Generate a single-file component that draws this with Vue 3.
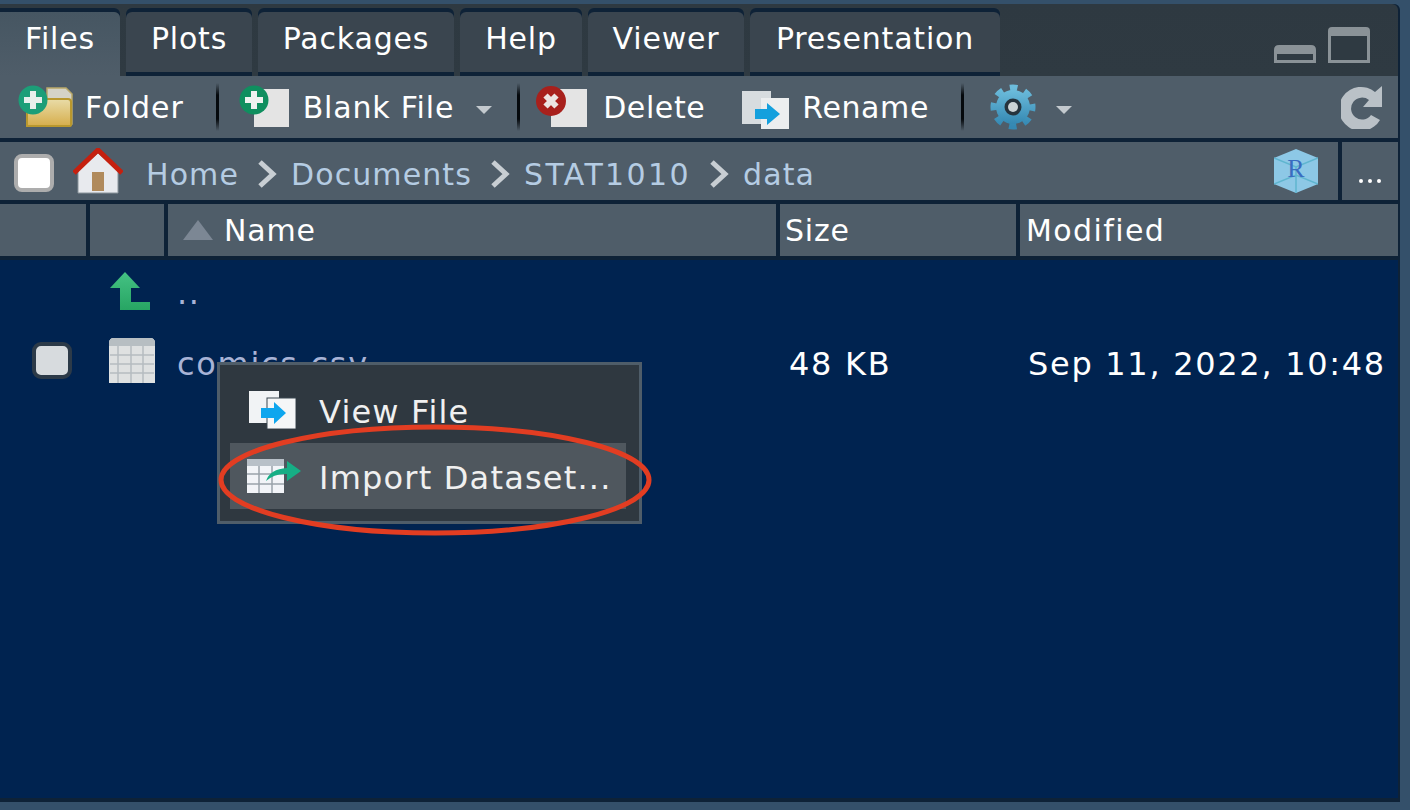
<script setup>
const tabs = [
  { label: "Files", width: 120, active: true },
  { label: "Plots", width: 126 },
  { label: "Packages", width: 196 },
  { label: "Help", width: 122 },
  { label: "Viewer", width: 156 },
  { label: "Presentation", width: 250 },
];

const crumbs = ["Home", "Documents", "STAT1010", "data"];
</script>

<template>
  <div class="page">
    <div class="pane">
      <!-- tabs -->
      <div class="tabs">
        <div
          v-for="tab in tabs"
          :key="tab.label"
          class="tab"
          :class="{ active: tab.active }"
          :style="{ width: `${tab.width}px` }"
        >
          {{ tab.label }}
        </div>
        <div class="win-btns">
          <svg width="42" height="18" viewBox="0 0 42 18">
            <path d="M0 18V5q0-5 5-5h32q5 0 5 5v13z" fill="#8a9297" />
            <rect x="3" y="9" width="36" height="6" fill="#2f3a42" />
          </svg>
          <svg width="42" height="36" viewBox="0 0 42 36">
            <path d="M0 36V4q0-4 4-4h34q4 0 4 4v32z" fill="#8a9297" />
            <rect x="3" y="9" width="36" height="24" fill="#2f3a42" />
          </svg>
        </div>
      </div>

      <!-- toolbar -->
      <div class="toolbar">
        <div class="tool tool-folder">
          <svg class="ico" width="56" height="44" viewBox="0 0 56 44">
            <defs>
              <linearGradient id="folderFill" x1="0" y1="0" x2="0" y2="1">
                <stop offset="0" stop-color="#e9dca8" />
                <stop offset="1" stop-color="#d6ae4c" />
              </linearGradient>
            </defs>
            <path d="M29 3h19l6 6v30H29z" fill="#d5d3c6" stroke="#b9a868" stroke-width="1.5" />
            <path d="M9 14h41q3 0 3 3v23q0 1-2 1H9z" fill="url(#folderFill)" stroke="#b9982e" stroke-width="2" />
            <circle cx="15" cy="15" r="14.5" fill="#1c9e78" />
            <path d="M12 6h6v6h6v6h-6v6h-6v-6H6v-6h6z" fill="#e6efec" />
          </svg>
          <span>Folder</span>
        </div>
        <div class="sep sep-first"></div>
        <div class="tool tool-blank">
          <svg class="ico" width="50" height="44" viewBox="0 0 50 44">
            <rect x="15" y="4" width="35" height="38" fill="#e4e4e4" />
            <circle cx="15" cy="15" r="14.5" fill="#0f8f5f" />
            <path d="M12 6h6v6h6v6h-6v6h-6v-6H6v-6h6z" fill="#eef2ef" />
          </svg>
          <span>Blank File</span>
          <i class="caret"></i>
        </div>
        <div class="sep sep-second"></div>
        <div class="tool tool-delete">
          <svg class="ico" width="52" height="44" viewBox="0 0 52 44">
            <rect x="15" y="4" width="36" height="38" fill="#e4e4e4" />
            <circle cx="15" cy="16" r="15" fill="#a8201c" />
            <path d="M9.500 10.500l11 11M20.500 10.500l-11 11" stroke="#ece4e2" stroke-width="6" />
          </svg>
          <span>Delete</span>
        </div>
        <div class="tool tool-rename">
          <svg class="ico" width="48" height="38" viewBox="0 0 48 38">
            <rect x="0" y="0" width="29" height="33" fill="#d7dcdf" />
            <rect x="19" y="7" width="28" height="31" fill="#eceeef" />
            <path d="M13 18h12v-6l13 11-13 11v-6H13z" fill="#14a0dd" />
          </svg>
          <span>Rename</span>
        </div>
        <div class="sep sep-gear"></div>
        <div class="tool tool-gear">
          <svg class="ico" width="46" height="46" viewBox="0 0 46 46">
            <defs>
              <linearGradient id="gearFill" x1="0" y1="0" x2="0" y2="1">
                <stop offset="0" stop-color="#6cbcdc" />
                <stop offset="1" stop-color="#3488b2" />
              </linearGradient>
            </defs>
            <circle cx="23" cy="23" r="19" fill="none" stroke="url(#gearFill)" stroke-width="7" stroke-dasharray="7.500 7.420" stroke-dashoffset="3.700" />
            <circle cx="23" cy="23" r="17" fill="url(#gearFill)" />
            <circle cx="23" cy="23" r="8.500" fill="#26343e" />
            <circle cx="23" cy="23" r="5" fill="#cbd3d6" />
          </svg>
          <i class="caret"></i>
        </div>
        <div class="spacer"></div>
        <svg class="refresh" width="42" height="44" viewBox="0 0 42 44">
          <path d="M41 1v21H22l6-7a11 11 0 1 0 2 15l9 5A22 22 0 1 1 34 7z" fill="#bac1c7" />
        </svg>
      </div>

      <!-- path -->
      <div class="crumbbar">
        <div class="crumbs">
          <div class="check-head"></div>
          <svg class="home" width="50" height="46" viewBox="0 0 50 46">
            <path d="M5 22L25 5l20 17v23H5z" fill="#e8eaee" stroke="#8b959c" />
            <rect x="19" y="24" width="12" height="19" fill="#b08a5c" />
            <path d="M1 25L25 2l24 23" fill="none" stroke="#c5200f" stroke-width="5" />
          </svg>
          <template v-for="(crumb, i) in crumbs" :key="crumb">
            <span class="crumb" :class="{ wide: crumb === 'STAT1010' }">{{ crumb }}</span>
            <svg v-if="i < crumbs.length - 1" class="chev" width="20" height="28" viewBox="0 0 20 28">
              <path d="M3 2l13 12L3 26" fill="none" stroke="#c8ced3" stroke-width="5" />
            </svg>
          </template>
          <div class="spacer"></div>
          <svg class="rbox" width="44" height="44" viewBox="0 0 44 44">
            <path d="M22 0l22 9v26l-22 9-22-9V9z" fill="#8dc8e6" />
            <path d="M0 9l22 9 22-9M22 18v26M0 35l22-9 22 9" fill="none" stroke="#5fb5cf" stroke-width="1.500" />
            <text x="22" y="28" text-anchor="middle" class="rtext">R</text>
          </svg>
        </div>
        <div class="more">
          <i></i><i></i><i></i>
        </div>
      </div>

      <!-- column headers -->
      <div class="table-head">
        <div class="th th-check"></div>
        <div class="th th-icon"></div>
        <div class="th th-name"><i class="sort"></i>Name</div>
        <div class="th th-size">Size</div>
        <div class="th th-mod">Modified</div>
      </div>

      <!-- files -->
      <div class="list">
        <div class="row row-up">
          <div class="cell-check"></div>
          <div class="cell-icon">
            <svg width="40" height="38" viewBox="0 0 40 38">
              <defs>
                <linearGradient id="upFill" x1="0" y1="0" x2="0" y2="1">
                  <stop offset="0" stop-color="#45c284" />
                  <stop offset="1" stop-color="#27a563" />
                </linearGradient>
              </defs>
              <path d="M15 0l15 16h-9v14h19v8H10V16H0z" fill="url(#upFill)" />
            </svg>
          </div>
          <div class="cell-name">..</div>
        </div>
        <div class="row row-file">
          <div class="cell-check"><div class="check"></div></div>
          <div class="cell-icon">
            <svg width="46" height="45" viewBox="0 0 46 45">
              <path d="M0 45V5q0-5 5-5h36q5 0 5 5v40z" fill="#dfe1e1" />
              <path d="M0 8V5q0-5 5-5h36q5 0 5 5v3z" fill="#b7bec2" />
              <path d="M1 17h44M1 26h44M1 35h44M9 8v37M22 8v37M34 8v37" stroke="#b6bcc0" stroke-width="1.500" />
            </svg>
          </div>
          <div class="cell-name">comics.csv</div>
          <div class="cell-size">48 KB</div>
          <div class="cell-mod">Sep 11, 2022, 10:48</div>
        </div>

        <!-- context menu -->
        <div class="menu">
          <div class="menu-item">
            <svg width="47" height="38" viewBox="0 0 47 38">
              <rect x="0" y="0" width="30" height="32" fill="#f1f3f5" />
              <rect x="18" y="7" width="29" height="31" fill="#f5f6f7" stroke="#3a4650" />
              <path d="M12 17h13v-6l12 11-12 11v-6H12z" fill="#0ea6ee" />
            </svg>
            <span>View File</span>
          </div>
          <div class="menu-item hot">
            <svg width="54" height="34" viewBox="0 0 54 34">
              <rect x="0" y="0" width="37" height="34" fill="#f2f4f8" />
              <rect x="0" y="0" width="37" height="7" fill="#b8c0c8" />
              <path d="M0 15h37M0 25h37M12 7v27M25 7v27" stroke="#9aa3ab" stroke-width="1.500" />
              <path d="M19 22q4-12 21-13V2l14 10-14 10V15q-12-1-21 7z" fill="#16ae85" />
            </svg>
            <span>Import Dataset...</span>
          </div>
        </div>

        <svg class="circle" width="440" height="118" viewBox="0 0 440 118">
          <ellipse cx="220" cy="59" rx="214" ry="53" fill="none" stroke="#e23d22" stroke-width="5" />
        </svg>
      </div>
    </div>
  </div>
</template>

<style>
html,
body {
  margin: 0;
  background: #34506a;
}
</style>

<style scoped>
.page {
  width: 1410px;
  height: 810px;
  box-sizing: border-box;
  padding: 4px 10px 8px 0;
  background: #34506a;
  font-family: "DejaVu Sans", sans-serif;
  overflow: hidden;
}

.pane {
  height: 798px;
  display: flex;
  flex-direction: column;
  background: #0e2237;
  border-radius: 0 6px 0 0;
  border-right: 2px solid #0e2237;
  box-sizing: border-box;
}

.tabs {
  height: 72px;
  flex: none;
  display: flex;
  align-items: flex-end;
  gap: 6px;
  padding-top: 4px;
  box-sizing: border-box;
  background: linear-gradient(#2e3941, #2f3a42);
  border-radius: 0 6px 0 0;
  position: relative;
}

.tab {
  height: 64px;
  box-sizing: border-box;
  padding: 0 0 8px;
  display: flex;
  align-items: center;
  justify-content: center;
  background: #3a454f;
  border: solid #0e2237;
  border-width: 0 0 4px;
  border-radius: 6px 6px 0 0;
  color: #fff;
  font-size: 30px;
  letter-spacing: 0.8px;
  box-shadow: 0 -4px 0 #0e2237;
}

.tab.active {
  background: linear-gradient(#465662, #4f5d69);
  border-bottom: 0;
  border-radius: 0 6px 0 0;
  padding-bottom: 12px;
}

.win-btns {
  margin-left: auto;
  display: flex;
  align-items: flex-end;
  gap: 12px;
  padding: 0 28px 13px 0;
}

.toolbar {
  height: 62px;
  flex: none;
  display: flex;
  align-items: center;
  background: #4f5d69;
  padding-left: 18px;
  box-sizing: border-box;
}

.tool {
  display: flex;
  align-items: center;
  color: #fff;
  font-size: 30px;
  letter-spacing: 0.6px;
}

.ico {
  flex: none;
}

.tool-folder span {
  margin-left: 11px;
  letter-spacing: 1px;
}

.tool-blank {
  margin-left: 20px;
}

.tool-blank span {
  margin-left: 14px;
  letter-spacing: 0.8px;
}

.tool-delete {
  margin-left: 16px;
}

.tool-delete span {
  margin-left: 15px;
}

.tool-rename {
  margin-left: 37px;
}

.tool-rename .ico {
  margin-top: 6px;
}

.tool-rename span {
  margin-left: 12px;
}

.tool-gear {
  margin-left: 26px;
}

.caret {
  display: block;
  width: 0;
  height: 0;
  margin: 6px 0 0 22px;
  border: solid transparent;
  border-width: 8px 8px 0;
  border-top-color: #c3c9ce;
}

.tool-gear .caret {
  margin-left: 20px;
}

.sep {
  width: 3px;
  height: 48px;
  background: linear-gradient(#4f5d69, #05090d 25%, #05090d 75%, #4f5d69);
}

.sep-first {
  margin-left: 32px;
}

.sep-second {
  margin-left: 25px;
}

.sep-gear {
  margin-left: 32px;
}

.spacer {
  flex: 1;
}

.refresh {
  margin-right: 15px;
}

.crumbbar {
  height: 58px;
  flex: none;
  margin-top: 4px;
  display: flex;
  gap: 4px;
}

.crumbs {
  flex: 1;
  display: flex;
  align-items: center;
  background: #4f5d69;
  padding: 0 20px 0 14px;
}

.check-head {
  width: 32px;
  height: 30px;
  margin-top: 3px;
  background: #fff;
  border: 4px solid #adadad;
  border-radius: 8px;
}

.home {
  margin-left: 19px;
}

.crumb {
  color: #b5cce3;
  font-size: 30px;
  letter-spacing: 1.1px;
  margin-left: 23px;
  margin-top: 6px;
}

.crumb.wide {
  letter-spacing: 2.4px;
}

.chev {
  margin-left: 18px;
  margin-top: 6px;
}

.chev + .crumb {
  margin-left: 14px;
}

.rtext {
  font-family: "Liberation Serif", serif;
  font-size: 26px;
  fill: #3a6cc0;
}

.more {
  width: 56px;
  background: #4f5d69;
  display: flex;
  justify-content: center;
  align-items: flex-end;
  gap: 5px;
  padding-bottom: 17px;
  box-sizing: border-box;
}

.more i {
  width: 4px;
  height: 4px;
  border-radius: 50%;
  background: #fff;
}

.table-head {
  height: 52px;
  flex: none;
  margin-top: 4px;
  display: flex;
  gap: 4px;
}

.th {
  background: #4f5d69;
  color: #fff;
  font-size: 30px;
  letter-spacing: 0.8px;
  display: flex;
  align-items: center;
  box-sizing: border-box;
  padding-left: 5px;
}

.th-check {
  width: 86px;
}

.th-icon {
  width: 74px;
}

.th-name {
  width: 608px;
  padding-left: 15px;
}

.th-size {
  width: 236px;
}

.th-mod {
  flex: 1;
  letter-spacing: 1.4px;
  padding-left: 6px;
}

.sort {
  display: block;
  width: 0;
  height: 0;
  margin-right: 11px;
  border: solid transparent;
  border-width: 0 15px 20px;
  border-bottom-color: #7c8794;
}

.list {
  flex: 1;
  margin-top: 4px;
  margin-bottom: 4px;
  background: #002350;
  position: relative;
}

.row {
  display: flex;
  align-items: center;
  color: #fff;
  font-size: 32px;
  letter-spacing: 1.7px;
}

.row-up {
  height: 62px;
  padding-top: 4px;
  box-sizing: border-box;
}

.row-up .cell-icon {
  margin-top: -4px;
}

.row-up .cell-icon svg {
  margin-left: 2px;
}

.row-file {
  height: 74px;
  padding-top: 10px;
  box-sizing: border-box;
}

.row-file .cell-check,
.row-file .cell-icon {
  margin-top: -8px;
}

.row-file .cell-icon svg {
  margin-left: 1px;
}

.cell-check {
  width: 108px;
  flex: none;
  padding-left: 32px;
  box-sizing: border-box;
}

.check {
  width: 40px;
  height: 37px;
  box-sizing: border-box;
  background: #d7dbde;
  border: 4px solid #2c3a48;
  border-radius: 9px;
}

.cell-icon {
  width: 69px;
  flex: none;
  display: flex;
}

.cell-name {
  width: 612px;
  flex: none;
  color: #a8b3d6;
}

.cell-size {
  width: 239px;
  flex: none;
}

.cell-mod {
  white-space: nowrap;
}

.menu {
  position: absolute;
  left: 217px;
  top: 102px;
  width: 425px;
  height: 162px;
  box-sizing: border-box;
  padding: 12px 13px 0 10px;
  background: #2f3840;
  border: 3px solid #4f5d69;
}

.menu-item {
  height: 66px;
  display: flex;
  align-items: center;
  padding-left: 19px;
  color: #f0f0f0;
  font-size: 32px;
  letter-spacing: 1.2px;
}

.menu-item span {
  margin-left: 23px;
  margin-top: 4px;
}

.menu-item.hot {
  background: #4f575e;
  padding-left: 17px;
}

.menu-item.hot span {
  margin-left: 18px;
}

.circle {
  position: absolute;
  left: 215px;
  top: 161px;
}
</style>
